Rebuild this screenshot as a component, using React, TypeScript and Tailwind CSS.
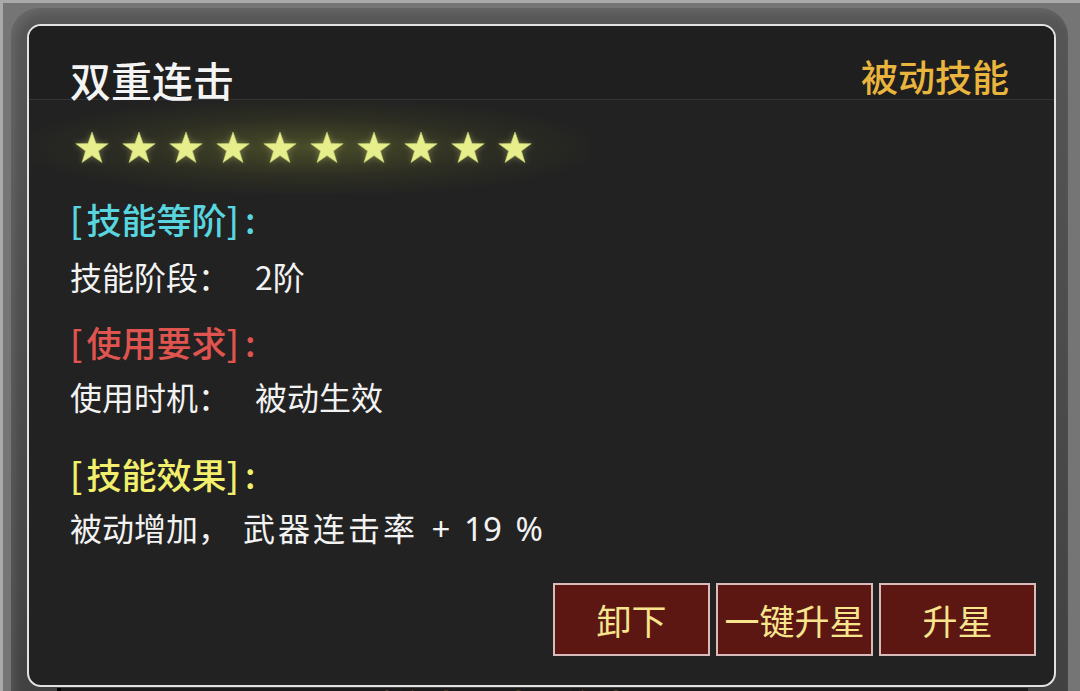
import React from 'react';

const FONT = "font-['Noto_Sans_CJK_SC','Noto_Sans',sans-serif]";

function Star() {
  return (
    <svg width="34" height="33" viewBox="0 0 34 33" className="drop-shadow-[0_0_3px_rgba(230,240,140,0.35)]">
      <polygon
        points="17,1 21,12.6 33.2,12.7 23.4,20 27,31.6 17,24.6 7,31.6 10.6,20 0.8,12.7 13,12.6"
        fill="#e6ef8c"
        stroke="#c9d070"
        strokeWidth="0.6"
      />
    </svg>
  );
}

function ActionButton({ label }: { label: string }) {
  return (
    <button className="w-[157px] h-[73px] bg-[#5c1713] border-2 border-[#d8bcbc] text-[#f6e58d] text-[35px] leading-none flex items-center justify-center">
      {label}
    </button>
  );
}

export default function App() {
  const stars = Array.from({ length: 10 });

  return (
    <div className={`w-[1080px] h-[691px] overflow-hidden bg-[#757575] border-t-[3px] border-l-[3px] border-[#a9a9a9] ${FONT}`}>
      <div className="ml-[8px] mt-[5px] w-[1057px] h-[720px] rounded-t-[28px] bg-gradient-to-b from-[#565656] to-[#404040] shadow-[inset_5px_5px_10px_rgba(255,255,255,0.10)] pt-[16px] pl-[16px]">
        {/* skill panel */}
        <div className="w-[1029px] h-[663px] rounded-[14px] border-2 border-[#e2e2e2] bg-[#222222] flex flex-col overflow-hidden">
          <div className="h-[74px] flex justify-between border-b border-[#343434] bg-[#1f1f1f]">
            <div className="pl-[41px] pt-[33px] text-[41px] leading-none font-medium text-[#f4f4f4]">双重连击</div>
            <div className="pr-[45px] pt-[32px] text-[37px] leading-none font-medium text-[#e9b53d]">被动技能</div>
          </div>

          <div className="w-[560px] h-[94px] flex items-center gap-[13px] pl-[46px] bg-[radial-gradient(ellipse_at_center,rgba(100,105,45,0.6)_0%,rgba(62,64,35,0.38)_45%,rgba(34,34,34,0)_75%)]">
            {stars.map((_, i) => (
              <Star key={i} />
            ))}
          </div>

          <div className="pl-[41px] text-[32px] leading-[40px]">
            <div className="mt-[5px] text-[35px] font-medium text-[#58d5df]">
              [<span className="ml-[4px]">技能等阶</span>]<span className="ml-[6px]">:</span>
            </div>
            <div className="mt-[17px] text-[#f2f2f2]">
              技能阶段：<span className="ml-[25px]">2阶</span>
            </div>
            <div className="mt-[26px] text-[35px] font-medium text-[#e0544f]">
              [<span className="ml-[4px]">使用要求</span>]<span className="ml-[6px]">:</span>
            </div>
            <div className="mt-[14px] text-[#f2f2f2]">
              使用时机：<span className="ml-[25px]">被动生效</span>
            </div>
            <div className="mt-[38px] text-[35px] font-medium text-[#f1ef6c]">
              [<span className="ml-[4px]">技能效果</span>]<span className="ml-[6px]">:</span>
            </div>
            <div className="mt-[13px] text-[#f2f2f2]">
              被动增加，<span className="ml-[13px] tracking-[3px]">武器连击率</span>
              <span className="font-['Noto_Sans',sans-serif] text-[33px] [word-spacing:5px]"> + 19 %</span>
            </div>
          </div>

          <div className="mt-auto pb-[29px] pr-[18px] flex justify-end gap-[6px]">
            <ActionButton label="卸下" />
            <ActionButton label="一键升星" />
            <ActionButton label="升星" />
          </div>
        </div>

        <div className="ml-[30px] mr-[40px] mt-[1px] h-[30px] bg-[#1b1b1b] border-l-4 border-black overflow-hidden">
          <div className="pl-[190px] mt-[1px] text-[34px] leading-none font-bold text-[#a88a34]">《《《 双重连击：武器连击 》》》</div>
        </div>
      </div>
    </div>
  );
}
